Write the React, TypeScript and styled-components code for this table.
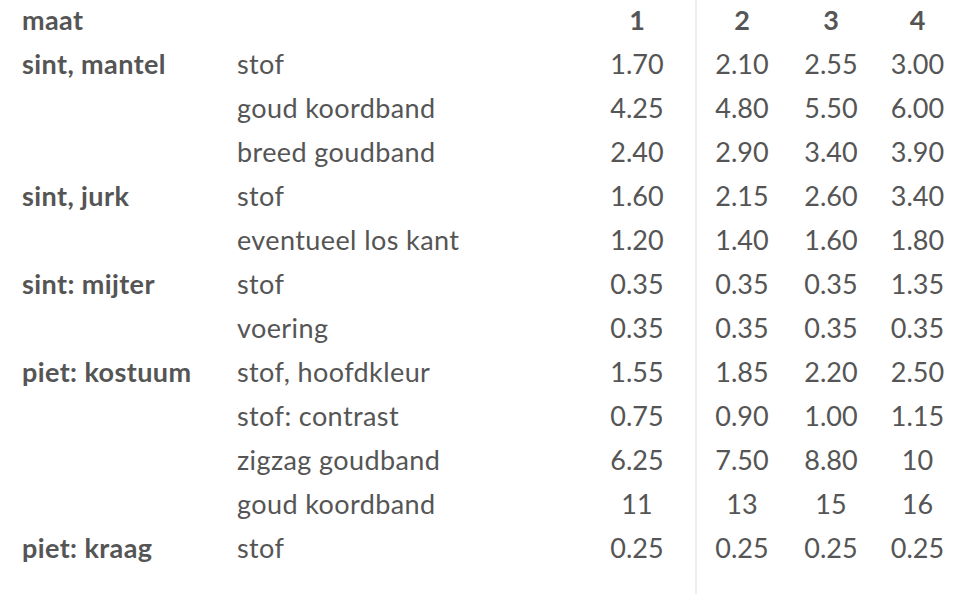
import React from 'react';
import styled, { createGlobalStyle } from 'styled-components';

const GlobalStyle = createGlobalStyle`
  html, body {
    margin: 0;
    padding: 0;
    background: #fff;
  }
  body {
    font-family: Lato, 'Open Sans', sans-serif;
    color: #555;
  }
`;

interface IRow {
  group?: string;
  item: string;
  sizes: string[];
}

const sizes = ['1', '2', '3', '4'];

const rows: IRow[] = [
  { group: 'sint, mantel', item: 'stof', sizes: ['1.70', '2.10', '2.55', '3.00'] },
  { item: 'goud koordband', sizes: ['4.25', '4.80', '5.50', '6.00'] },
  { item: 'breed goudband', sizes: ['2.40', '2.90', '3.40', '3.90'] },
  { group: 'sint, jurk', item: 'stof', sizes: ['1.60', '2.15', '2.60', '3.40'] },
  { item: 'eventueel los kant', sizes: ['1.20', '1.40', '1.60', '1.80'] },
  { group: 'sint: mijter', item: 'stof', sizes: ['0.35', '0.35', '0.35', '1.35'] },
  { item: 'voering', sizes: ['0.35', '0.35', '0.35', '0.35'] },
  { group: 'piet: kostuum', item: 'stof, hoofdkleur', sizes: ['1.55', '1.85', '2.20', '2.50'] },
  { item: 'stof: contrast', sizes: ['0.75', '0.90', '1.00', '1.15'] },
  { item: 'zigzag goudband', sizes: ['6.25', '7.50', '8.80', '10'] },
  { item: 'goud koordband', sizes: ['11', '13', '15', '16'] },
  { group: 'piet: kraag', item: 'stof', sizes: ['0.25', '0.25', '0.25', '0.25'] },
];

const SizeTable = styled.div`
  display: grid;
  grid-template-columns: 215px 342px 116px 2px 90px 88px 85px;
  grid-template-rows: 41px repeat(${rows.length}, 44px) 1fr;
  min-height: 100vh;
  padding-left: 22px;
  box-sizing: border-box;
  font-size: 27px;
`;

const Cell = styled.div<{ $bold?: boolean; $center?: boolean; $head?: boolean }>`
  display: flex;
  align-items: center;
  justify-content: ${(p) => (p.$center ? 'center' : 'flex-start')};
  font-weight: ${(p) => (p.$bold ? 700 : 400)};
  letter-spacing: ${(p) => (p.$center ? '0' : '0.4px')};
  padding-bottom: ${(p) => (p.$head ? '2px' : '0')};
  white-space: nowrap;
`;

// vertical rule between size 1 and size 2, runs to the bottom of the page
const Divider = styled.div`
  grid-column: 4;
  grid-row: 1 / -1;
  background: #eeeeee;
`;

export default function App() {
  return (
    <>
      <GlobalStyle />
      <SizeTable>
        <Divider />
        <Cell $bold $head>
          maat
        </Cell>
        <Cell $head />
        {sizes.map((s) => (
          <Cell key={s} $bold $center $head>
            {s}
          </Cell>
        ))}
        {rows.map((row, r) => (
          <React.Fragment key={r}>
            <Cell $bold>{row.group}</Cell>
            <Cell>{row.item}</Cell>
            {row.sizes.map((s, i) => (
              <Cell key={i} $center>
                {s}
              </Cell>
            ))}
          </React.Fragment>
        ))}
      </SizeTable>
    </>
  );
}
